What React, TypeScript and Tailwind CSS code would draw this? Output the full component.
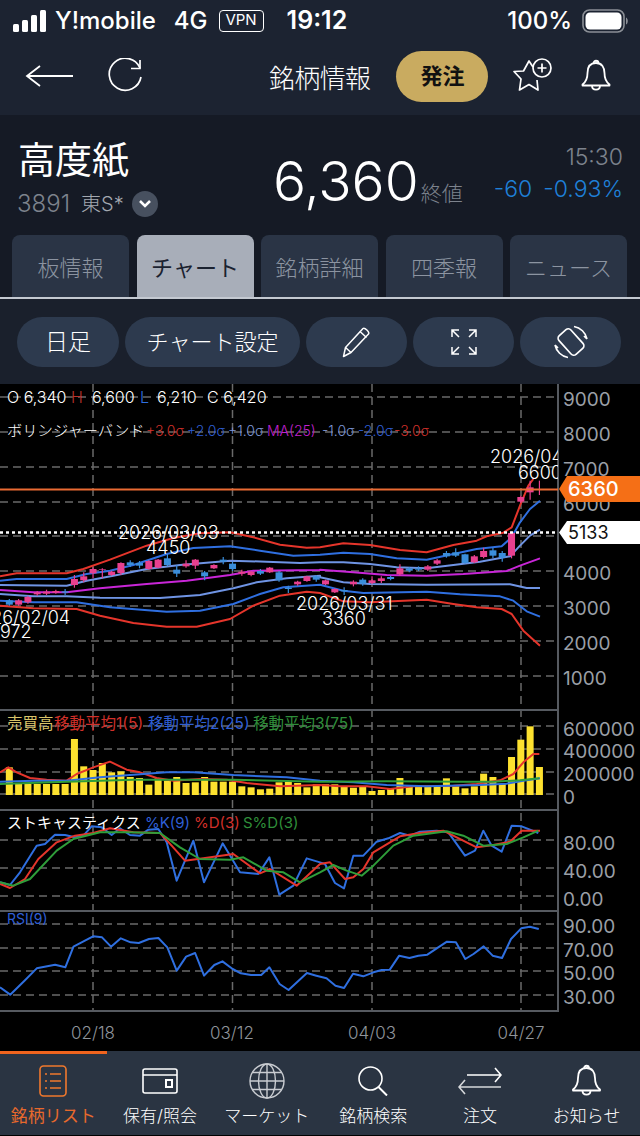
import React from "react";

type P = number[][];

// the zoomed crops were read at 3x, so the series below stay in those units
const at = (x0: number, y0: number, pts: P) => pts.map(([x, y]) => `${x0 + x / 3},${y0 + y / 3}`);
const line = (x0: number, y0: number, a: P, b: P) => [...at(x0, y0, a), ...at(x0 + 320, y0, b)].join(" ");

const bands = [
  { c: "#e5352b", a: [[0,412],[50,403],[200,403],[250,390],[330,362],[440,320],[520,297],[600,283],[690,280],[760,295],[840,317],[920,326],[960,325]], b: [[0,325],[70,313],[150,318],[240,333],[320,340],[400,318],[470,305],[500,292],[550,281],[575,265],[600,200],[625,140],[640,120]] },
  { c: "#2f6fe0", a: [[0,425],[50,420],[200,420],[260,405],[330,395],[400,378],[500,345],[580,327],[690,322],[780,335],[880,350],[960,347]], b: [[0,347],[70,341],[150,345],[230,358],[320,362],[400,345],[470,330],[545,322],[575,295],[600,250],[630,210],[660,185]] },
  { c: "#6f94e4", a: [[0,438],[200,440],[260,425],[340,410],[440,390],[540,378],[690,365],[800,368],[900,372],[960,370]], b: [[0,370],[70,370],[150,375],[230,385],[320,388],[400,378],[480,368],[570,352],[600,320],[630,290],[660,272]] },
  { c: "#c926d8", a: [[0,453],[100,460],[200,460],[300,448],[440,435],[560,425],[690,408],[760,395],[960,393]], b: [[0,392],[100,400],[200,408],[320,410],[430,405],[560,396],[600,380],[660,358]] },
  { c: "#6f94e4", a: [[0,465],[100,472],[200,472],[300,476],[480,477],[600,468],[700,448],[770,430],[860,418],[960,410]], b: [[0,415],[70,430],[150,435],[320,437],[570,436],[620,447],[660,447]] },
  { c: "#2f6fe0", a: [[0,485],[100,490],[230,490],[330,505],[500,518],[600,515],[700,495],[780,465],[850,445],[960,437]], b: [[0,437],[70,455],[130,462],[320,458],[420,466],[540,472],[580,485],[620,517],[660,533]] },
  { c: "#e5352b", a: [[0,500],[100,508],[230,510],[300,530],[400,552],[500,563],[590,563],[690,540],[760,500],[840,470],[920,458],[960,462]], b: [[0,462],[70,487],[150,490],[320,482],[400,495],[470,505],[545,510],[575,525],[610,575],[660,620]] },
];

// [body top, body bottom, wick top, wick bottom, 1 = up (pink)]
const candles: number[][] = [
  [484,497,480,500,0],[484,497,480,500,1],[474,490,470,494,1],[460,466,456,470,1],[458,464,452,468,1],[456,461,452,464,1],[457,461,450,468,0],
  [420,438,408,446,1],[412,424,400,430,1],[390,403,385,418,1],[390,392,388,418,1],[398,408,395,410,1],[372,402,370,408,1],[370,378,364,384,0],
  [372,380,366,388,0],[366,390,364,392,1],[362,386,360,388,1],[358,378,345,382,0],[392,404,378,414,0],[374,382,364,386,1],[362,380,360,390,1],
  [400,412,396,424,0],[378,388,376,390,1],[362,368,354,376,0],[374,390,368,396,0],[398,404,392,410,1],[398,408,396,412,1],[396,404,390,408,0],
  [386,400,384,402,1],[400,424,396,428,0],[446,450,440,462,0],[428,436,425,440,1],[412,426,410,428,1],[412,422,408,428,0],[424,436,422,438,1],
  [450,460,448,462,1],[453,457,445,468,0],[428,436,424,442,1],[422,434,418,440,0],[424,432,412,436,1],[418,426,412,432,1],[414,420,410,424,0],
  [388,406,376,410,1],[388,395,384,400,0],[388,392,382,396,0],[382,392,378,396,1],[364,374,360,378,1],[342,352,336,356,0],[340,350,328,354,0],
  [346,372,344,374,0],[352,370,348,372,1],[336,354,326,358,1],[334,350,326,358,0],[342,356,336,368,0],[282,350,278,358,1],[174,188,170,192,1],
  [145,160,125,182,1],[150,152,125,168,1],
];

const volumes = [175,225,225,225,225,225,225,90,172,183,162,190,187,204,207,227,208,215,204,222,220,204,218,218,218,232,235,241,239,220,218,222,235,226,226,226,232,236,232,246,243,240,207,234,234,232,232,208,232,238,232,194,204,225,144,92,52,174];

const volLines = [
  { c: "#e5352b", a: [[0,190],[25,175],[50,190],[90,207],[140,212],[200,215],[230,195],[280,175],[330,158],[380,182],[420,190],[470,207],[520,215],[600,210],[680,212],[740,222],[840,232],[960,228]], b: [[0,228],[60,232],[140,232],[210,240],[280,232],[400,230],[470,225],[540,214],[580,195],[610,160],[640,135],[658,135]] },
  { c: "#2f6fe0", a: [[0,218],[100,215],[200,215],[300,205],[400,197],[500,190],[580,190],[700,198],[860,205],[960,215]], b: [[0,215],[100,220],[200,228],[320,232],[480,228],[560,224],[610,215],[660,208]] },
  { c: "#2f9e3a", a: [[0,225],[200,218],[400,212],[700,212],[960,218]], b: [[0,218],[200,217],[440,218],[520,218],[600,214],[658,208]] },
];

const stochLines = [
  { c: "#2f6fe0", a: [[0,520],[30,528],[60,490],[85,450],[110,410],[135,405],[165,377],[195,378],[225,385],[250,380],[275,352],[305,355],[335,378],[360,358],[390,378],[420,380],[445,362],[475,360],[500,400],[530,515],[580,395],[612,520],[668,403],[720,490],[775,495],[808,445],[838,557],[880,530],[920,448],[960,460]], b: [[0,460],[15,465],[45,522],[72,538],[100,440],[130,440],[170,398],[205,388],[240,372],[270,380],[300,368],[350,365],[385,370],[435,440],[465,425],[490,365],[515,410],[545,428],[575,350],[605,352],[655,372]] },
  { c: "#e5352b", a: [[0,525],[30,537],[75,510],[115,450],[170,400],[225,380],[280,372],[330,358],[400,370],[480,372],[515,410],[555,455],[610,448],[700,435],[780,493],[810,480],[890,530],[960,465]], b: [[0,465],[30,460],[75,510],[100,505],[130,480],[160,430],[240,382],[300,372],[370,365],[410,385],[470,415],[520,408],[570,398],[605,365],[660,365]] },
  { c: "#2f9e3a", a: [[0,520],[40,530],[90,510],[170,425],[220,390],[300,370],[380,370],[480,372],[540,415],[600,450],[690,452],[730,445],[800,485],[850,490],[900,520],[960,490]], b: [[0,490],[40,468],[80,485],[125,500],[160,470],[220,410],[280,380],[380,367],[430,380],[490,410],[560,405],[610,385],[655,365]] },
];

const rsi = [[0,250],[25,272],[60,230],[90,193],[135,182],[160,190],[180,128],[228,97],[250,100],[272,128],[296,103],[320,115],[340,117],[365,105],[388,102],[410,130],[433,200],[456,158],[478,147],[500,215],[525,183],[545,172],[570,195],[590,208],[615,213],[640,213],[660,190],[685,240],[707,258],[752,207],[775,215],[800,223],[822,245],[843,252],[865,209],[890,217],[915,205],[935,198],[955,197],[978,155],[1003,162],[1025,155],[1047,152],[1070,133],[1095,113],[1117,115],[1140,165],[1160,150],[1185,127],[1207,155],[1230,162],[1252,105],[1277,73],[1298,68],[1320,75]]
  .map(([x, y]) => `${x / 2.45},${905 + y / 3}`)
  .join(" ");

const priceGrid = [398, 433, 468, 503, 537, 572, 607, 642, 677];
const subGrid = [727, 750, 773, 795, 841, 869, 897, 925, 949, 972, 996];
const vLines = [93, 232.5, 372, 521];

const axis: [string, number][] = [
  ["9000", 400], ["8000", 435], ["7000", 470], ["6000", 505], ["4000", 574], ["3000", 609], ["2000", 644], ["1000", 679],
  ["600000", 730], ["400000", 752], ["200000", 775], ["0", 798],
  ["80.00", 844], ["40.00", 872], ["0.00", 900],
  ["90.00", 927], ["70.00", 951], ["50.00", 974], ["30.00", 998],
];

const Chart = () => (
  <svg width="640" height="667" viewBox="0 385 640 667" className="block bg-black">
    <defs>
      <clipPath id="plot">
        <rect x="0" y="385" width="558" height="667" />
      </clipPath>
    </defs>
    <g stroke="#6a6a6a" strokeWidth="1.5" strokeDasharray="8 5">
      {[...priceGrid, ...subGrid].map((y) => (
        <line key={y} x1="0" x2="558" y1={y} y2={y} />
      ))}
      {vLines.map((x) => (
        <line key={x} x1={x} x2={x} y1="385" y2="1012" />
      ))}
    </g>
    {[711, 811, 912, 1012].map((y) => (
      <line key={y} x1="0" x2="558" y1={y} y2={y} stroke="#565a60" strokeWidth="2" />
    ))}
    <line x1="558" x2="558" y1="385" y2="1013" stroke="#565a60" strokeWidth="2" />

    <g clipPath="url(#plot)">
      <g fill="none" strokeWidth="2" strokeLinejoin="round">
        {bands.map((s, i) => (
          <polyline key={i} points={line(0, 440, s.a, s.b)} stroke={s.c} />
        ))}
      </g>
      {candles.map((c, i) => {
        const x = 9.33 + 9.3 * i;
        const col = c[4] ? "#e8408f" : "#3b8edb";
        return (
          <g key={i} fill={col} stroke={col}>
            <line x1={x} x2={x} y1={440 + c[2] / 3} y2={440 + c[3] / 3} strokeWidth="1.2" />
            <rect x={x - 3.5} y={440 + c[0] / 3} width="7" height={(c[1] - c[0]) / 3} stroke="none" />
          </g>
        );
      })}
      <line x1="0" x2="558" y1="490.5" y2="490.5" stroke="#ea6a33" strokeWidth="2" />
      <line x1="0" x2="558" y1="533.5" y2="533.5" stroke="#ffffff" strokeWidth="2.5" strokeDasharray="3 3" />

      {volumes.map((t, i) => (
        <rect key={i} x={9.33 + 9.3 * i - 3.5} y={710 + t / 3} width="7" height={(258 - t) / 3} fill="#fde12f" />
      ))}
      <g fill="none" strokeWidth="2" strokeLinejoin="round">
        {volLines.map((s, i) => (
          <polyline key={i} points={line(0, 710, s.a, s.b)} stroke={s.c} />
        ))}
        {stochLines.map((s, i) => (
          <polyline key={i} points={line(0, 710, s.a, s.b)} stroke={s.c} />
        ))}
        <polyline points={rsi} stroke="#2f6fe0" />
      </g>

      <g fill="#ffffff" fontSize="18" fontWeight="300">
        <text x="118" y="540">2026/03/03</text>
        <text x="146" y="555">4450</text>
        <text x="296" y="611">2026/03/31</text>
        <text x="322" y="626">3360</text>
        <text x="-31" y="625">2026/02/04</text>
        <text x="-11" y="639">2972</text>
        <text x="490" y="464">2026/04/24</text>
        <text x="518" y="480">6600</text>
      </g>
    </g>

    <g fontSize="16" fontWeight="300" fill="#ffffff">
      <text x="7" y="404">O 6,340</text>
      <text x="71" y="404" fill="#b8322c">H</text>
      <text x="92" y="404">6,600</text>
      <text x="140" y="404" fill="#2f6fe0">L</text>
      <text x="157" y="404">6,210</text>
      <text x="207" y="404">C 6,420</text>
      <text x="7" y="437" fontSize="15.300">ボリンジャーバンド</text>
    </g>
    <g fontSize="14" fontWeight="300">
      <text x="146" y="437" fill="#d2302a">+3.0σ</text>
      <text x="187" y="437" fill="#2f5fd6">+2.0σ</text>
      <text x="228" y="437" fill="#7d97d8">+1.0σ</text>
      <text x="267" y="437" fill="#c020d0">MA(25)</text>
      <text x="322" y="437" fill="#7d97d8">-1.0σ</text>
      <text x="358" y="437" fill="#2f5fd6">-2.0σ</text>
      <text x="394" y="437" fill="#d2302a">-3.0σ</text>
    </g>
    <g fontSize="15.500">
      <text x="7" y="730" fill="#d9c46a">売買高</text>
      <text x="54" y="730" fill="#d2302a">移動平均1(5)</text>
      <text x="148" y="730" fill="#2f5fd6">移動平均2(25)</text>
      <text x="253" y="730" fill="#2f8f3a">移動平均3(75)</text>
      <text x="7" y="829" fill="#ffffff" fontSize="15">ストキャスティクス</text>
      <text x="145" y="829" fill="#2f5fd6" fontSize="15">%K(9)</text>
      <text x="194" y="829" fill="#d2302a" fontSize="15">%D(3)</text>
      <text x="243" y="829" fill="#2f8f3a" fontSize="15">S%D(3)</text>
      <text x="7" y="925" fontSize="14" fill="#2f5fd6">RSI(9)</text>
    </g>

    <g fill="#9a9fa6" fontSize="19">
      {axis.map(([t, y]) => (
        <text key={t} x="563" y={y + 7}>{t}</text>
      ))}
    </g>
    <g fill="#8f949b" fontSize="17" fontWeight="300" textAnchor="middle">
      <text x="93" y="1040">02/18</text>
      <text x="232" y="1040">03/12</text>
      <text x="372" y="1040">04/03</text>
      <text x="521" y="1040">04/27</text>
    </g>

    <polygon points="559,490 567,477 640,477 640,503 567,503" fill="#f56f16" />
    <text x="568" y="497" fill="#ffffff" fontSize="20" fontWeight="500">6360</text>
    <polygon points="559,533.5 567,522 640,522 640,545 567,545" fill="#ffffff" />
    <text x="568" y="540" fill="#111111" fontSize="18">5133</text>
  </svg>
);

const SignalIcon = () => (
  <svg width="34" height="24" viewBox="0 0 34 24" fill="#ffffff">
    <rect x="0" y="15" width="6" height="8" rx="1.5" />
    <rect x="9" y="11" width="6" height="12" rx="1.5" />
    <rect x="18" y="6" width="6" height="17" rx="1.5" />
    <rect x="27" y="1" width="6" height="22" rx="1.5" />
  </svg>
);

const Battery = () => (
  <svg width="46" height="24" viewBox="0 0 46 24">
    <rect x="1" y="1" width="41" height="22" rx="6.5" fill="none" stroke="#8b8f96" strokeWidth="1.6" />
    <rect x="3.5" y="3.5" width="36" height="17" rx="4.5" fill="#ffffff" />
    <path d="M44 8.5c1.2.5 1.8 2 1.8 3.5s-.6 3-1.8 3.5z" fill="#8b8f96" />
  </svg>
);

const BellIcon = ({ w, h }: { w: number; h: number }) => (
  <svg width={w} height={h} viewBox="0 0 30 34" fill="none" stroke="#ffffff" strokeWidth="1.8" strokeLinejoin="round">
    <path d="M15 4c-6 0-8.500 4.500-8.500 10 0 5-1.500 9-5 11.500v1h27v-1c-3.500-2.500-5-6.500-5-11.500 0-5.500-2.500-10-8.500-10z" />
    <path d="M12.500 4.300c0-3.400 5-3.400 5 0" />
    <path d="M11 26.500c0 5.500 8 5.500 8 0" />
  </svg>
);

const NavIcon = ({ i }: { i: number }) => {
  if (i === 0)
    return (
      <svg width="28" height="32" viewBox="0 0 28 32" fill="none" stroke="#f0782d" strokeWidth="1.6">
        <rect x="1" y="1" width="26" height="30" rx="3.500" />
        <path d="M6 9h2M11 9h11M6 16h2M11 16h11M6 23h2M11 23h11" />
      </svg>
    );
  if (i === 1)
    return (
      <svg width="36" height="26" viewBox="0 0 36 26" fill="none" stroke="#ffffff" strokeWidth="1.6">
        <rect x="1" y="1" width="34" height="24" rx="2" />
        <path d="M1 7h34" />
        <rect x="24" y="12" width="6" height="7" strokeWidth="2" />
      </svg>
    );
  if (i === 2)
    return (
      <svg width="36" height="36" viewBox="0 0 36 36" fill="none" stroke="#c9ccd1" strokeWidth="1.4">
        <circle cx="18" cy="18" r="17" />
        <ellipse cx="18" cy="18" rx="8.500" ry="17" />
        <path d="M18 1v34M1 18h34M3.500 9.500h29M3.500 26.500h29" />
      </svg>
    );
  if (i === 3)
    return (
      <svg width="30" height="30" viewBox="0 0 30 30" fill="none" stroke="#ffffff" strokeWidth="1.6">
        <circle cx="12.500" cy="12.500" r="11.500" />
        <path d="M20.500 21l8.500 8.500" strokeWidth="2" />
      </svg>
    );
  if (i === 4)
    return (
      <svg width="44" height="28" viewBox="0 0 44 28" fill="none" stroke="#ffffff" strokeWidth="1.6">
        <path d="M9 8h34M37 1l6 7-6 7" />
        <path d="M43 20H1M7 13l-6 7 6 7" stroke="#d5d7da" />
      </svg>
    );
  return <BellIcon w={31} h={34} />;
};

const navItems = ["銘柄リスト", "保有/照会", "マーケット", "銘柄検索", "注文", "お知らせ"];

const tabs = ["板情報", "チャート", "銘柄詳細", "四季報", "ニュース"];

export default function App() {
  return (
    <div className="flex h-[1136px] w-[640px] flex-col overflow-hidden bg-black font-[Inter,'Noto_Sans_CJK_JP',sans-serif] text-white">
      <div className="h-[115px] bg-[#1c2331]">
        <div className="flex h-[41px] items-center pl-[13px] text-[24px]">
          <SignalIcon />
          <span className="ml-[8px] font-medium">Y!mobile</span>
          <span className="ml-[18px] font-medium">4G</span>
          <span className="ml-[11px] flex h-[22px] w-[45px] items-center justify-center rounded-[4px] border border-white text-[15px]">VPN</span>
          <span className="ml-[23px] text-[25px] font-semibold">19:12</span>
          <span className="ml-auto font-medium">100%</span>
          <span className="ml-[10px] mr-[12px] flex">
            <Battery />
          </span>
        </div>
        <div className="flex h-[74px] items-center pb-[4px]">
          <svg className="ml-[25px]" width="49" height="26" viewBox="0 0 49 26" fill="none" stroke="#ffffff" strokeWidth="1.8">
            <path d="M48 13H2M15 3L2 13l13 10" />
          </svg>
          <svg className="ml-[33px]" width="36" height="36" viewBox="0 0 36 36" fill="none" stroke="#ffffff" strokeWidth="1.7">
            <path d="M33 10A16 16 0 1 0 34 19" />
            <path d="M33 2v8.500h-9" />
          </svg>
          <span className="ml-[126px] mt-[4px] text-[26px] font-light tracking-tight">銘柄情報</span>
          <button className="ml-[26px] flex h-[51px] w-[92px] items-center justify-center rounded-full bg-[#c9ab60] text-[22px] font-bold text-[#111111]">発注</button>
          <svg className="ml-[25px]" width="40" height="36" viewBox="0 0 40 36" fill="none" stroke="#ffffff" strokeWidth="1.7" strokeLinejoin="round">
            <path d="M20 9L16 3 10.500 13 1 13.500 8 21 6.500 32 16 26.500 25 32 24 22" />
            <circle cx="29" cy="10" r="9" />
            <path d="M29 5.500v9M24.500 10h9" />
          </svg>
          <span className="ml-[28px] flex">
            <BellIcon w={30} h={34} />
          </span>
        </div>
      </div>

      <div className="h-[120px] bg-[#151a25] pt-[24px]">
        <div className="flex">
          <div className="-mt-[3px] ml-[18px] w-[200px]">
            <div className="text-[37px] leading-[50px]">高度紙</div>
            <div className="mt-[3px] flex items-center">
              <span className="-ml-[1px] text-[24px] font-light leading-[30px] text-[#7d838d]">3891</span>
              <span className="ml-[11px] text-[20px] font-light text-[#a3a8b0]">東S*</span>
              <span className="ml-[8px] flex h-[26px] w-[26px] items-center justify-center rounded-full bg-[#47505f]">
                <svg width="14" height="10" viewBox="0 0 14 10" fill="none" stroke="#ffffff" strokeWidth="2.500">
                  <path d="M2 2l5 5 5-5" />
                </svg>
              </span>
            </div>
          </div>
          <div className="ml-[55px] flex items-end pb-[3px]">
            <span className="text-[55px] font-light leading-[70px]">6,360</span>
            <span className="mb-[7px] ml-[2px] text-[21px] font-light text-[#7d838d]">終値</span>
          </div>
          <div className="ml-auto mr-[17px] mt-[2px] flex flex-col items-end">
            <span className="text-[23px] font-light leading-[32px] text-[#7d838d]">15:30</span>
            <div className="text-[23px] font-light leading-[32px] text-[#1f80d8]">
              <span>-60</span>
              <span className="ml-[11px]">-0.93%</span>
            </div>
          </div>
        </div>
      </div>

      <div className="h-[64px] bg-[#151a25]">
        <div className="flex h-[64px] gap-[7.5px] border-b-2 border-[#c4c9d1] pl-[12px]">
          {tabs.map((t, i) => (
            <div
              key={t}
              className={
                i === 1
                  ? "flex w-[117px] items-center justify-center rounded-t-lg bg-[#a8aeb9] pt-[4px] text-[22px] text-[#1b2230]"
                  : "flex w-[117px] items-center justify-center rounded-t-lg bg-[#2a3445] pt-[4px] text-[22px] font-light text-[#8c94a1]"
              }
            >
              {t}
            </div>
          ))}
        </div>
      </div>

      <div className="flex h-[85px] gap-[6px] bg-[#1a202c] pl-[17px] pt-[18px]">
        <button className="flex h-[50px] w-[102px] items-center justify-center rounded-full bg-[#2d3a4e] text-[23px] font-light">日足</button>
        <button className="flex h-[50px] w-[175px] items-center justify-center rounded-full bg-[#2d3a4e] text-[22px] font-light">チャート設定</button>
        <button className="flex h-[50px] w-[101px] items-center justify-center rounded-full bg-[#2d3a4e]">
          <svg width="30" height="32" viewBox="0 0 30 32" fill="none" stroke="#ffffff" strokeWidth="1.500" strokeLinejoin="round">
            <path d="M1.500 30.500l2-9L21 2.500c1.500-1.500 7 3.500 5.500 5.500L9 26.500z" />
            <path d="M18 5.500l6.500 6M3.500 21.500L9 26.500" />
          </svg>
        </button>
        <button className="flex h-[50px] w-[101px] items-center justify-center rounded-full bg-[#2d3a4e]">
          <svg width="26" height="26" viewBox="0 0 26 26" fill="none" stroke="#ffffff" strokeWidth="1.500">
            <path d="M1 8V1h7M1 1l7 7M18 1h7v7M25 1l-7 7M1 18v7h7M1 25l7-7M25 18v7h-7M25 25l-7-7" />
          </svg>
        </button>
        <button className="flex h-[50px] w-[101px] items-center justify-center rounded-full bg-[#2d3a4e]">
          <svg width="36" height="36" viewBox="0 0 36 36" fill="none" stroke="#ffffff" strokeWidth="1.700">
            <rect x="10" y="5.500" width="16" height="25" rx="3.500" transform="rotate(-42 18 18)" />
            <path d="M21 2.500A16 16 0 0 1 34 15M34 15l-3-3" />
            <path d="M15 33.500A16 16 0 0 1 2 21M2 21l3 3" />
          </svg>
        </button>
      </div>

      <Chart />

      <div className="relative grid h-[84px] flex-none grid-cols-6 bg-[#2a3442]">
        <div className="absolute left-0 top-0 h-[3px] w-[107px] bg-[#f0641e]" />
        {navItems.map((t, i) => (
          <div key={t} className="flex flex-col items-center">
            <div className="flex h-[53px] items-center pt-[7px]">
              <NavIcon i={i} />
            </div>
            <span className={i === 0 ? "text-[17px] leading-[24px] text-[#e8692c]" : "text-[17px] font-light leading-[24px] text-white"}>{t}</span>
          </div>
        ))}
      </div>
    </div>
  );
}
